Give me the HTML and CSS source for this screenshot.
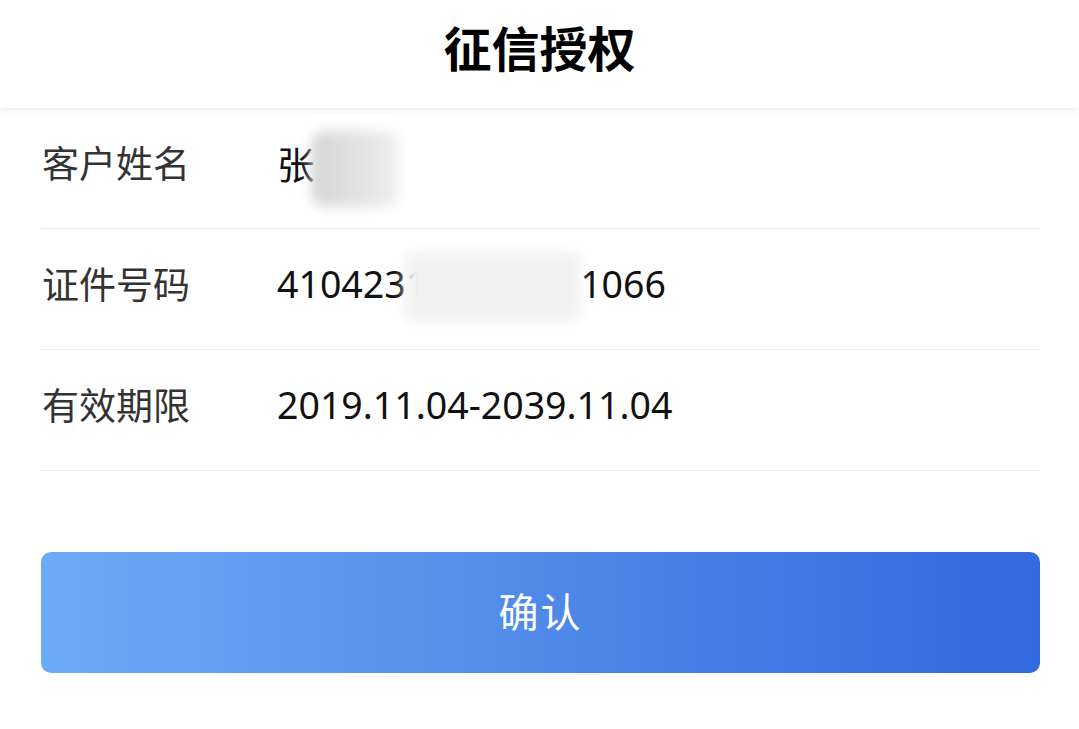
FILE: index.html
```html
<!DOCTYPE html>
<html lang="zh">
<head>
<meta charset="utf-8">
<title>征信授权</title>
<link rel="stylesheet" href="styles.css">
</head>
<body>
<header class="topbar"><h1 class="title">征信授权</h1></header>
<main class="content">
  <div class="row">
    <span class="label">客户姓名</span>
    <span class="value">张<span class="mask mask-name"></span></span>
  </div>
  <div class="row">
    <span class="label">证件号码</span>
    <span class="value">4104231<span class="mask mask-id"></span>1066</span>
  </div>
  <div class="row">
    <span class="label">有效期限</span>
    <span class="value">2019.11.04-2039.11.04</span>
  </div>
  <button class="confirm" type="button">确认</button>
</main>
</body>
</html>
```
FILE: styles.css
```css
html, body {
  margin: 0;
  padding: 0;
  background: #ffffff;
  font-family: "Noto Sans", "Noto Sans CJK SC", sans-serif;
  color: #111;
}
.topbar {
  height: 108px;
  display: flex;
  align-items: center;
  justify-content: center;
  background: #fff;
  box-shadow: 0 2px 6px rgba(0, 0, 0, 0.08);
  position: relative;
  z-index: 1;
}
.title {
  margin: 0;
  font-size: 48px;
  font-weight: 700;
  color: #000;
  font-family: "Noto Sans CJK SC", sans-serif;
  padding-bottom: 16px;
}
.content {
  padding: 0 39px 0 41px;
  display: flex;
  flex-direction: column;
}
.row {
  height: 121px;
  border-bottom: 1px solid #ececec;
  display: flex;
  align-items: center;
  padding-bottom: 12px;
  box-sizing: border-box;
}
.label {
  width: 235px;
  padding-left: 1px;
  font-size: 37px;
  color: #333;
  font-family: "Noto Sans CJK SC", sans-serif;
}
.value {
  font-size: 37.5px;
  color: #111;
  font-family: "Noto Sans", "Noto Sans CJK SC", sans-serif;
  display: flex;
  align-items: center;
}
.mask {
  display: inline-block;
  filter: blur(6px);
}
.mask-name {
  width: 88px;
  height: 76px;
  margin-left: -4px;
  margin-top: 14px;
  background: linear-gradient(90deg, #d6d6d6, #e2e2e2 55%, #efefef);
  border-radius: 14px;
}
.mask-id {
  width: 175px;
  height: 68px;
  margin-left: -22px;
  margin-top: 8px;
  background: #f1f1f1;
  border-radius: 6px;
}
.confirm {
  margin-top: 81px;
  height: 121px;
  width: 100%;
  border: none;
  border-radius: 10px;
  background: linear-gradient(90deg, #6cabf6 0%, #4f8ae9 50%, #3169df 100%);
  color: #fff;
  font-size: 40px;
  font-family: "Noto Sans CJK SC", sans-serif;
  letter-spacing: 2px;
  padding-bottom: 6px;
}
```
